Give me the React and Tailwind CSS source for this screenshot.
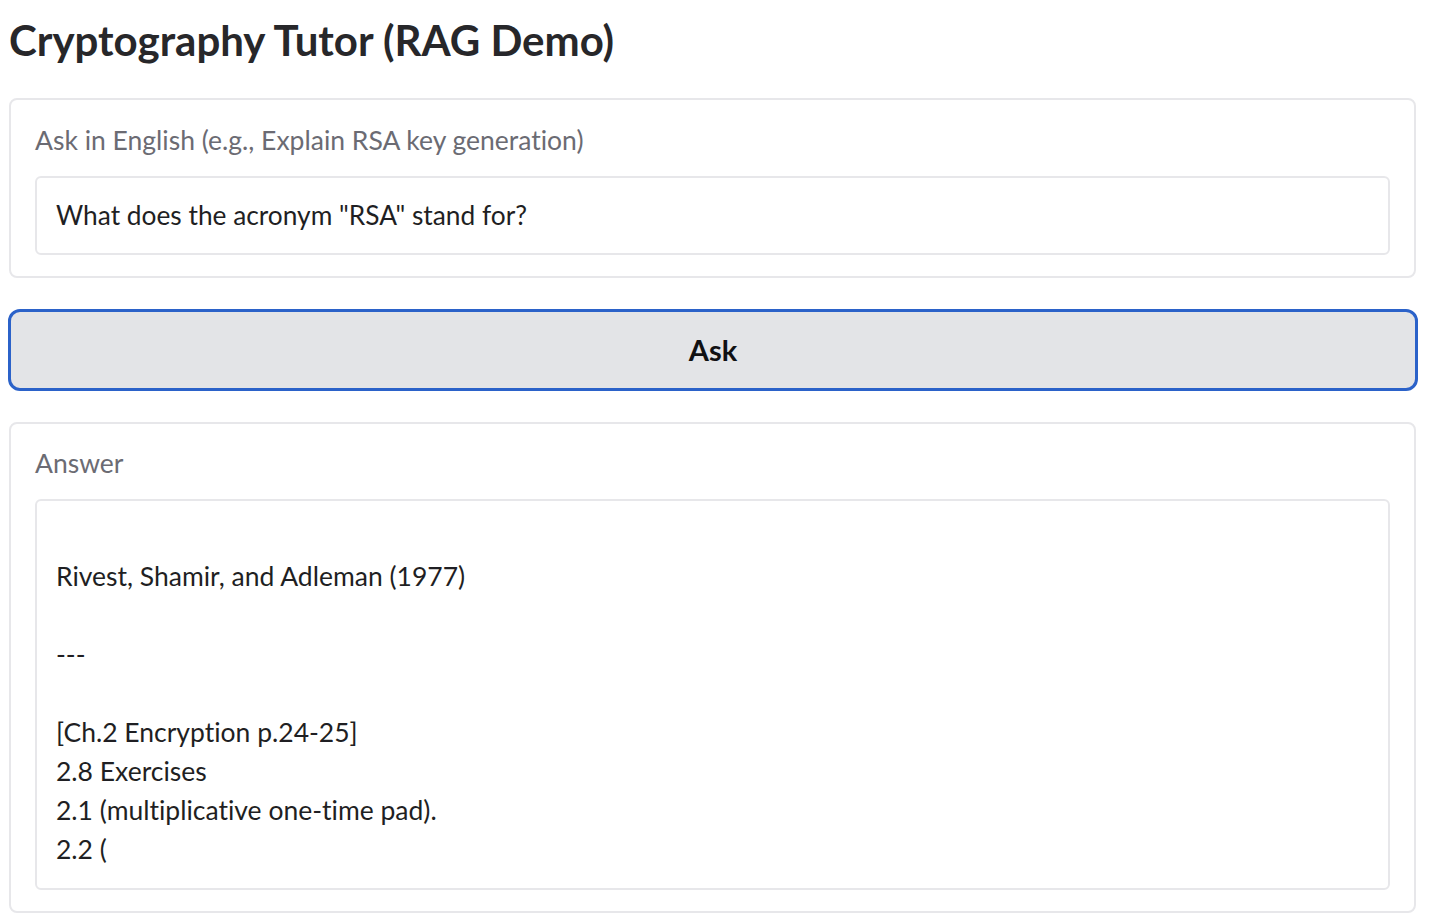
export default function App() {
  const answer = [
    '',
    'Rivest, Shamir, and Adleman (1977)',
    '',
    '---',
    '',
    '[Ch.2 Encryption p.24-25]',
    '2.8 Exercises',
    '2.1 (multiplicative one-time pad).',
    '2.2 (',
  ];

  return (
    <div className="min-h-screen bg-white font-['Lato',sans-serif] text-[#27272a] [font-variant-ligatures:none]">
      <div className="ml-[9px] w-[1407px] pt-[13px]">
        <h1 className="text-[42px] font-bold leading-[54px] text-[#27272a]">
          Cryptography Tutor (RAG Demo)
        </h1>

        <div className="mt-[31px] rounded-[8px] border-2 border-[#e7e7ea] px-[24px] pt-[22px] pb-[21px]">
          <div className="text-[26.5px] leading-[36px] text-[#6b6b73]">
            Ask in English (e.g., Explain RSA key generation)
          </div>
          <div className="mt-[18px] flex h-[79px] items-center rounded-[6px] border-2 border-[#e7e7ea] px-[19px]">
            <span className="text-[26.3px] text-[#1f1f23]">What does the acronym "RSA" stand for?</span>
          </div>
        </div>

        <button className="-ml-[1px] mt-[31px] flex h-[82px] w-[1410px] items-center justify-center rounded-[12px] border-[3px] border-[#2b62c9] bg-[#e3e4e7] text-[29px] font-bold text-[#111113]">
          Ask
        </button>

        <div className="mt-[31px] rounded-[8px] border-2 border-[#e7e7ea] px-[24px] pt-[21px] pb-[21px]">
          <div className="text-[26.5px] leading-[36px] text-[#6b6b73]">Answer</div>
          <div className="mt-[18px] rounded-[6px] border-2 border-[#e7e7ea] px-[19px] pt-[17px] pb-[19px]">
            {answer.map((line, i) => (
              <div key={i} className="h-[39px] text-[26.5px] leading-[39px] text-[#1f1f23]">
                {line}
              </div>
            ))}
          </div>
        </div>
      </div>
    </div>
  );
}
